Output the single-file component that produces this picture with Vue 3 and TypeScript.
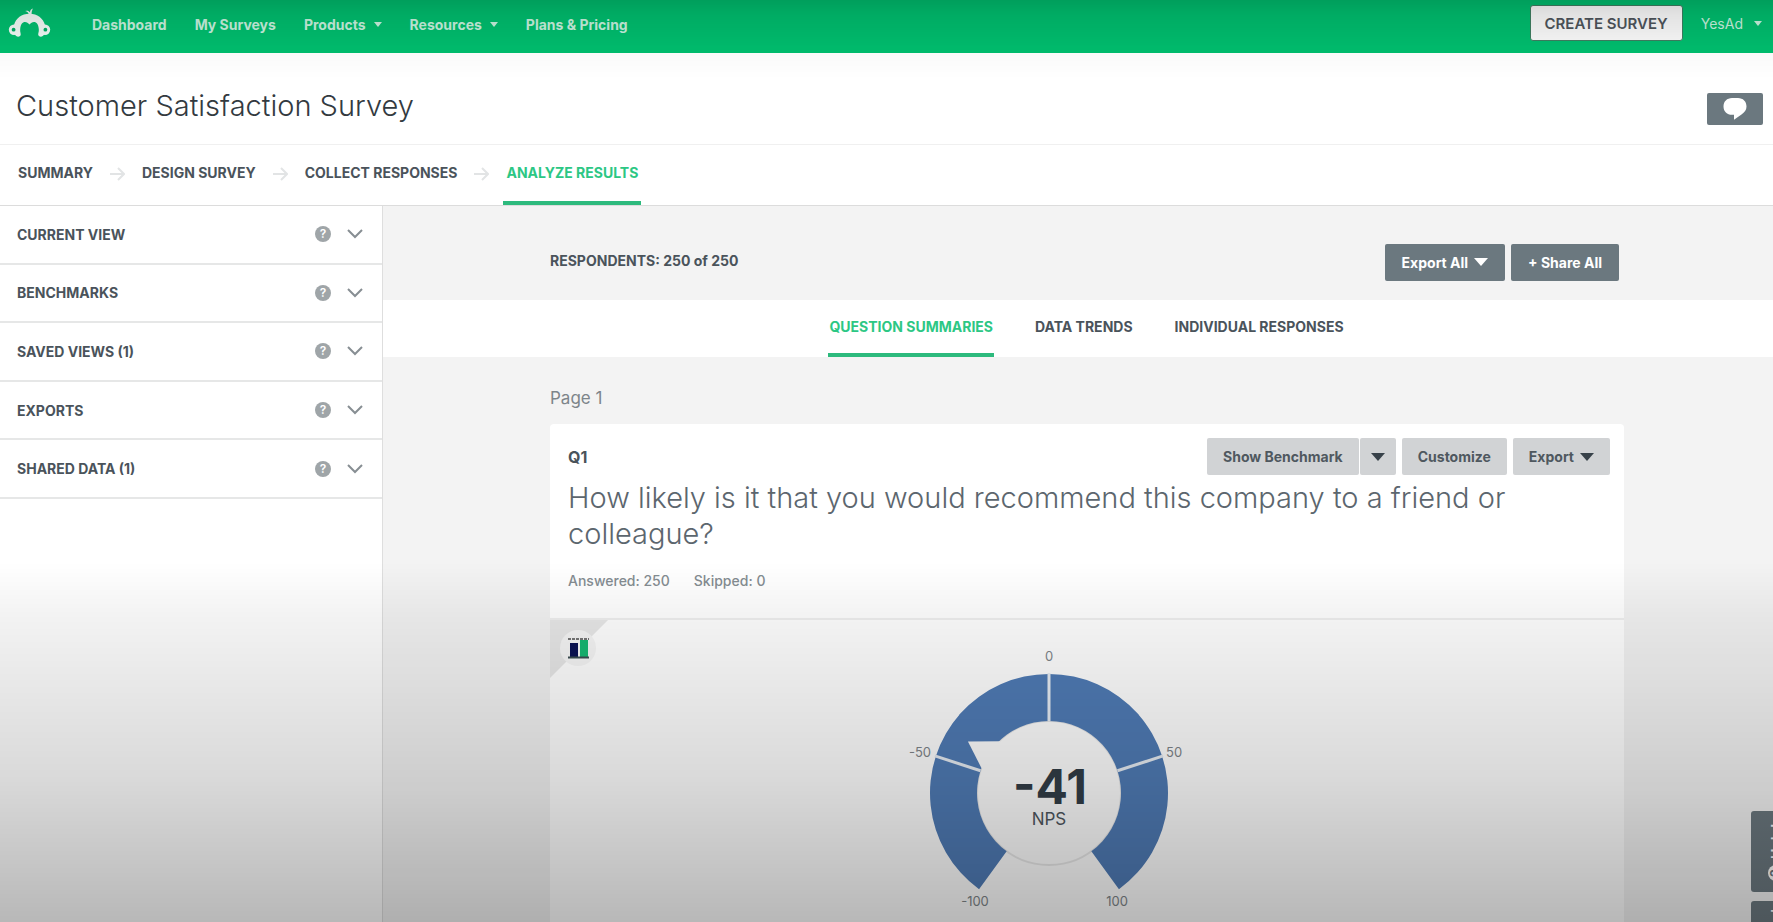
<script setup lang="ts">
interface NavItem {
  label: string
  menu?: boolean
}

const navItems: NavItem[] = [
  { label: 'Dashboard' },
  { label: 'My Surveys' },
  { label: 'Products', menu: true },
  { label: 'Resources', menu: true },
  { label: 'Plans & Pricing' },
]
const steps: string[] = ['SUMMARY', 'DESIGN SURVEY', 'COLLECT RESPONSES', 'ANALYZE RESULTS']
const panels: string[] = ['CURRENT VIEW', 'BENCHMARKS', 'SAVED VIEWS (1)', 'EXPORTS', 'SHARED DATA (1)']
const tabs: string[] = ['QUESTION SUMMARIES', 'DATA TRENDS', 'INDIVIDUAL RESPONSES']

const score = -41
const cx = 150
const cy = 150
const outer = 119
const inner = 72

// The dial sweeps 144 degrees to each side of the top for scores of -100 to 100.
function polar(value: number, radius: number): [number, number] {
  const angle = (value * 1.44 * Math.PI) / 180
  return [cx + radius * Math.sin(angle), cy - radius * Math.cos(angle)]
}
function point(value: number, radius: number): string {
  return polar(value, radius).map((n) => n.toFixed(2)).join(' ')
}
const ring = `M${point(-100, outer)} A${outer} ${outer} 0 1 1 ${point(100, outer)} L${point(100, inner)} A${inner} ${inner} 0 1 0 ${point(-100, inner)} Z`
const needle = `M${point(score + 11, inner - 1)} L${point(score + 1, 96)} L${point(score - 8, inner - 1)} Z`
const ticks = [-50, 0, 50].map((v) => `M${point(v, inner)} L${point(v, outer + 1)}`)
</script>

<template>
  <div class="page">
    <header class="topbar">
      <a href="#" class="logo" aria-label="Home">
        <svg viewBox="8 7 43 30" width="43" height="30" aria-hidden="true">
          <path d="M29 14C28.500 11.500 27.200 10.400 25.200 10C27.200 9.300 29 9.800 29.900 11.300C30.200 9.200 31.200 8 33 7.600C32 9.300 31.500 11 31.600 14Z" />
          <path d="M14 24C16 17 21.500 12.700 29.500 12.700C37.500 12.700 43 17 45 24L45 32C43.500 36 39.500 36.800 38.300 34C38 32 39 31.500 38.800 28C38.500 23.500 36.500 21 34 21C32 21 31 22.200 29.500 23.400C28 22.200 27 21 25 21C22.500 21 20.500 23.500 20.200 28C20 31.500 21 32 20.700 34C19.500 36.800 15.500 36 14 32Z" />
          <circle cx="14" cy="28.700" r="5.200" />
          <circle cx="45" cy="28.700" r="5.200" />
          <circle class="hole" cx="13.600" cy="28.700" r="1.900" />
          <circle class="hole" cx="45.400" cy="28.700" r="1.900" />
        </svg>
      </a>
      <nav class="mainnav" aria-label="Main">
        <a v-for="item in navItems" :key="item.label" href="#">
          {{ item.label }}
          <svg v-if="item.menu" class="caret" viewBox="0 0 8 5" width="8" height="5" aria-hidden="true"><path d="M0 0H8L4 5Z" /></svg>
        </a>
      </nav>
      <button type="button" class="create">CREATE SURVEY</button>
      <button type="button" class="account">
        YesAd
        <svg class="caret" viewBox="0 0 8 5" width="8" height="5" aria-hidden="true"><path d="M0 0H8L4 5Z" /></svg>
      </button>
    </header>

    <div class="titlebar">
      <h1>Customer Satisfaction Survey</h1>
      <button type="button" class="comment" aria-label="Comments">
        <svg viewBox="0 0 24 22" width="24" height="22" aria-hidden="true">
          <path d="M9 0H15C20 0 23.500 3.500 23.500 8.500C23.500 12 21.500 14 18.500 16.500L11 21.800V16.800H9C4 16.800 .5 13.500 .5 8.500C.5 3.500 4 0 9 0Z" />
        </svg>
      </button>
    </div>

    <nav class="steps" aria-label="Survey steps">
      <template v-for="(step, i) in steps" :key="step">
        <svg v-if="i > 0" class="arrow" viewBox="0 0 15 14" width="15" height="14" aria-hidden="true"><path d="M0 7H14M8 1L14 7L8 13" /></svg>
        <a href="#" :class="{ active: i === 3 }">{{ step }}</a>
      </template>
    </nav>

    <div class="body">
      <aside class="sidebar">
        <div class="panels">
          <div v-for="panel in panels" :key="panel" class="panel">
            <h2>{{ panel }}</h2>
            <button type="button" class="hint" :aria-label="'About ' + panel">?</button>
            <button type="button" class="expand" :aria-label="'Expand ' + panel">
              <svg viewBox="0 0 16 10" width="16" height="10" aria-hidden="true"><path d="M1 1L8 8L15 1" /></svg>
            </button>
          </div>
        </div>
      </aside>

      <main class="content">
        <div class="toolbar column">
          <p class="respondents">RESPONDENTS: 250 of 250</p>
          <div class="actions">
            <button type="button" class="dark">
              Export All
              <svg viewBox="0 0 14 8" width="14" height="8" aria-hidden="true"><path d="M0 0H14L7 8Z" /></svg>
            </button>
            <button type="button" class="dark">+ Share All</button>
          </div>
        </div>

        <nav class="tabs" aria-label="Results">
          <a v-for="(tab, i) in tabs" :key="tab" href="#" :class="{ active: i === 0 }">{{ tab }}</a>
        </nav>

        <div class="column">
          <p class="pagename">Page 1</p>
          <article class="card">
            <div class="cardhead">
              <div class="cardtop">
                <h3>Q1</h3>
                <div class="actions">
                  <div class="split">
                    <button type="button" class="light">Show Benchmark</button>
                    <button type="button" class="light more" aria-label="Benchmark options">
                      <svg viewBox="0 0 14 8" width="14" height="8" aria-hidden="true"><path d="M0 0H14L7 8Z" /></svg>
                    </button>
                  </div>
                  <button type="button" class="light">Customize</button>
                  <button type="button" class="light">
                    Export
                    <svg viewBox="0 0 14 8" width="14" height="8" aria-hidden="true"><path d="M0 0H14L7 8Z" /></svg>
                  </button>
                </div>
              </div>
              <p class="question">How likely is it that you would recommend this company to a friend or colleague?</p>
              <p class="counts"><span>Answered: 250</span><span>Skipped: 0</span></p>
            </div>
            <div class="chart">
              <svg class="corner" viewBox="0 0 60 60" width="60" height="60" aria-hidden="true">
                <path class="fold" d="M0 0H58L0 58Z" />
                <circle class="disc" cx="28" cy="28" r="18" />
                <path class="dots" d="M18 19H39" />
                <rect class="navy" x="20" y="23" width="8" height="14" />
                <rect class="green" x="30" y="20" width="8" height="17" />
                <path class="base" d="M18 37.500H39" />
              </svg>
              <svg class="gauge" viewBox="0 0 300 300" width="300" height="300" role="img" aria-label="Net promoter score">
                <circle class="rim" :cx="cx" :cy="cy" :r="inner" />
                <path class="ring" :d="ring" />
                <path v-for="t in ticks" :key="t" class="tick" :d="t" />
                <path class="needle" :d="needle" />
                <text class="mark" x="150" y="18" text-anchor="middle">0</text>
                <text class="mark" x="32" y="114" text-anchor="end">-50</text>
                <text class="mark" x="267" y="114">50</text>
                <text class="mark" x="76" y="263" text-anchor="middle">-100</text>
                <text class="mark" x="218" y="263" text-anchor="middle">100</text>
                <text class="score" x="151" y="161" text-anchor="middle">{{ score }}</text>
                <text class="unit" x="150" y="182" text-anchor="middle">NPS</text>
              </svg>
            </div>
          </article>
        </div>
      </main>
    </div>

    <div class="floaters">
      <button type="button" class="floater">
        <span class="q" aria-hidden="true">?</span>
        <span>Help!</span>
      </button>
      <button type="button" class="floater"><span>Feedback</span></button>
    </div>
    <div class="shade" aria-hidden="true"></div>
  </div>
</template>

<style>
body {
  margin: 0;
}
</style>

<style scoped>
.page {
  position: relative;
  display: flex;
  flex-direction: column;
  height: 100vh;
  overflow: hidden;
  background: #fff;
  color: #4a535b;
  font-family: Inter, "Liberation Sans", sans-serif;
  font-size: 14px;
}
h1, h2, h3, p {
  margin: 0;
  font-weight: inherit;
}
a {
  color: inherit;
  text-decoration: none;
}
button {
  margin: 0;
  padding: 0;
  border: 0;
  background: none;
  color: inherit;
  font: inherit;
  cursor: pointer;
}
svg {
  display: block;
  fill: currentColor;
}

.topbar {
  display: flex;
  align-items: center;
  flex: none;
  height: 53px;
  padding: 0 8px;
  box-sizing: border-box;
  background: #00bf6f;
  color: #c8f2df;
}
.logo {
  margin-bottom: 8px;
  color: #f3fbf7;
}
.hole {
  fill: #00b066;
}
.mainnav {
  display: flex;
  gap: 28px;
  margin: 0 auto 4px 41px;
  font-weight: 700;
}
.mainnav a, .account {
  display: flex;
  align-items: center;
  gap: 8px;
}
.create {
  height: 36px;
  margin: 0 18px 7px 0;
  padding: 0 14px;
  border: 1px solid #3f7f62;
  border-radius: 3px;
  background: #fcfcfc;
  color: #4f565d;
  font-weight: 600;
  font-size: 15px;
}
.account {
  gap: 11px;
  margin-bottom: 7px;
  padding-right: 3px;
}

.titlebar {
  display: flex;
  align-items: center;
  justify-content: space-between;
  flex: none;
  height: 91px;
  padding: 0 10px 0 16px;
  border-bottom: 1px solid #f0f0f0;
}
h1 {
  padding-top: 14px;
  color: #333a3f;
  font-size: 29px;
  font-weight: 300;
}
.comment {
  display: flex;
  align-items: center;
  justify-content: center;
  width: 56px;
  height: 32px;
  margin-top: 20px;
  border-radius: 2px;
  background: #6b787f;
  color: #fff;
}

.steps {
  display: flex;
  align-items: stretch;
  gap: 14px;
  flex: none;
  height: 60px;
  padding-left: 15px;
  border-bottom: 1px solid #dcdcdc;
  font-weight: 700;
}
.steps a {
  display: flex;
  align-items: center;
  padding: 0 3px 2px;
  border-bottom: 4px solid transparent;
}
.steps .active, .tabs .active {
  border-bottom-color: #2dba7d;
  color: #2cc784;
}
.arrow {
  align-self: center;
  margin-bottom: 2px;
  fill: none;
  stroke: #e2e4e5;
  stroke-width: 2;
}

.body {
  display: flex;
  flex: 1;
  min-height: 0;
}
.sidebar {
  flex: none;
  width: 382px;
  border-right: 1px solid #dedede;
}
.panels {
  display: grid;
  grid-auto-rows: 1fr;
  min-height: 293px;
}
.panel {
  display: flex;
  align-items: center;
  padding: 0 19px 0 17px;
  border-bottom: 2px solid #e6e7e7;
}
h2 {
  flex: 1;
  font-size: 14px;
  font-weight: 700;
}
.hint {
  width: 16px;
  height: 16px;
  margin-right: 16px;
  border-radius: 50%;
  background: #9fa5a8;
  color: #fff;
  font-size: 12px;
  font-weight: 600;
  line-height: 16px;
}
.expand path {
  fill: none;
  stroke: #878e93;
  stroke-width: 2;
}

.content {
  flex: 1;
  min-width: 0;
  overflow-y: auto;
  scrollbar-width: none;
  background: #f3f3f3;
}
.column {
  max-width: 1074px;
  margin-left: max(0px, calc((100% - 1056px) / 2));
}
.toolbar {
  display: flex;
  align-items: center;
  justify-content: space-between;
  box-sizing: border-box;
  height: 94px;
  padding: 18px 5px 0 0;
}
.respondents {
  padding-bottom: 3px;
  font-weight: 700;
}
.actions {
  display: flex;
  gap: 6px;
}
.dark, .light {
  display: flex;
  align-items: center;
  gap: 6px;
  height: 37px;
  padding: 0 17px;
  border-radius: 2px;
  background: #6b787f;
  color: #fff;
  font-weight: 700;
}
.light {
  padding: 0 16px;
  background: #d1d3d5;
  color: #4f585f;
}
.light svg {
  fill: #38424a;
}
.split {
  display: flex;
  gap: 1px;
}
.more {
  padding: 0 11px;
}
.tabs {
  display: flex;
  justify-content: center;
  gap: 40px;
  height: 57px;
  padding-left: 17px;
  background: #fff;
  font-weight: 700;
}
.tabs a {
  display: flex;
  align-items: center;
  padding: 0 1px;
  border-bottom: 4px solid transparent;
}
.pagename {
  padding: 30px 0 15px;
  color: #7d858a;
  font-size: 17px;
  line-height: 22px;
}
.card {
  border-radius: 4px;
  background: #fff;
}
.cardhead {
  padding: 14px 14px 27px 18px;
  border-bottom: 2px solid #f0f0f0;
}
.cardtop {
  display: flex;
  align-items: center;
  justify-content: space-between;
}
h3 {
  font-size: 16px;
  font-weight: 700;
}
.question {
  padding: 5px 0 19px;
  color: #5c666e;
  font-size: 29px;
  font-weight: 300;
  line-height: 36px;
}
.counts {
  display: flex;
  gap: 24px;
  color: #858d92;
  font-weight: 500;
  line-height: 20px;
}
.chart {
  position: relative;
  display: flex;
  justify-content: center;
  padding: 23px 0 30px;
}
.gauge {
  margin-right: 76px;
}
.corner {
  position: absolute;
  top: 0;
  left: 0;
}
.fold { fill: #e8e8e8; }
.disc { fill: #f6f6f6; }
.dots { stroke: #777; stroke-width: 2; stroke-dasharray: 3 1; }
.navy { fill: #0b1354; }
.green { fill: #17b873; }
.base { stroke: #3c4e52; stroke-width: 2; }
.ring { fill: #507cb6; }
.tick { stroke: #e8eef5; stroke-width: 3; }
.needle { fill: #fff; }
.rim { fill: #fff; stroke: #eaeaea; stroke-width: 2; }
.mark { fill: #80868a; font-size: 13px; }
.score { fill: #333e48; font-size: 48px; font-weight: 700; }
.unit { fill: #4f585f; font-size: 17px; }

.floaters {
  position: absolute;
  bottom: -60px;
  right: -28px;
  display: flex;
  flex-direction: column;
  gap: 9px;
}
.floater {
  display: flex;
  align-items: center;
  justify-content: flex-start;
  gap: 6px;
  box-sizing: border-box;
  width: 50px;
  height: 81px;
  padding: 11px 0;
  border-radius: 0 3px 3px 0;
  background: #6b787f;
  color: #fff;
  font-weight: 600;
  writing-mode: vertical-rl;
  transform: rotate(180deg);
}
.q {
  width: 16px;
  height: 16px;
  border-radius: 50%;
  background: #fff;
  color: #6b787f;
  line-height: 16px;
  text-align: center;
}
.shade {
  position: absolute;
  inset: 0;
  background:
    linear-gradient(to bottom, rgba(0, 0, 0, 0.17), rgba(0, 0, 0, 0.1) 14px, rgba(0, 0, 0, 0.02) 53px, transparent 80px),
    linear-gradient(to top, rgba(0, 0, 0, 0.28), rgba(0, 0, 0, 0.15) 142px, rgba(0, 0, 0, 0.05) 303px, transparent 360px);
  pointer-events: none;
}
</style>
